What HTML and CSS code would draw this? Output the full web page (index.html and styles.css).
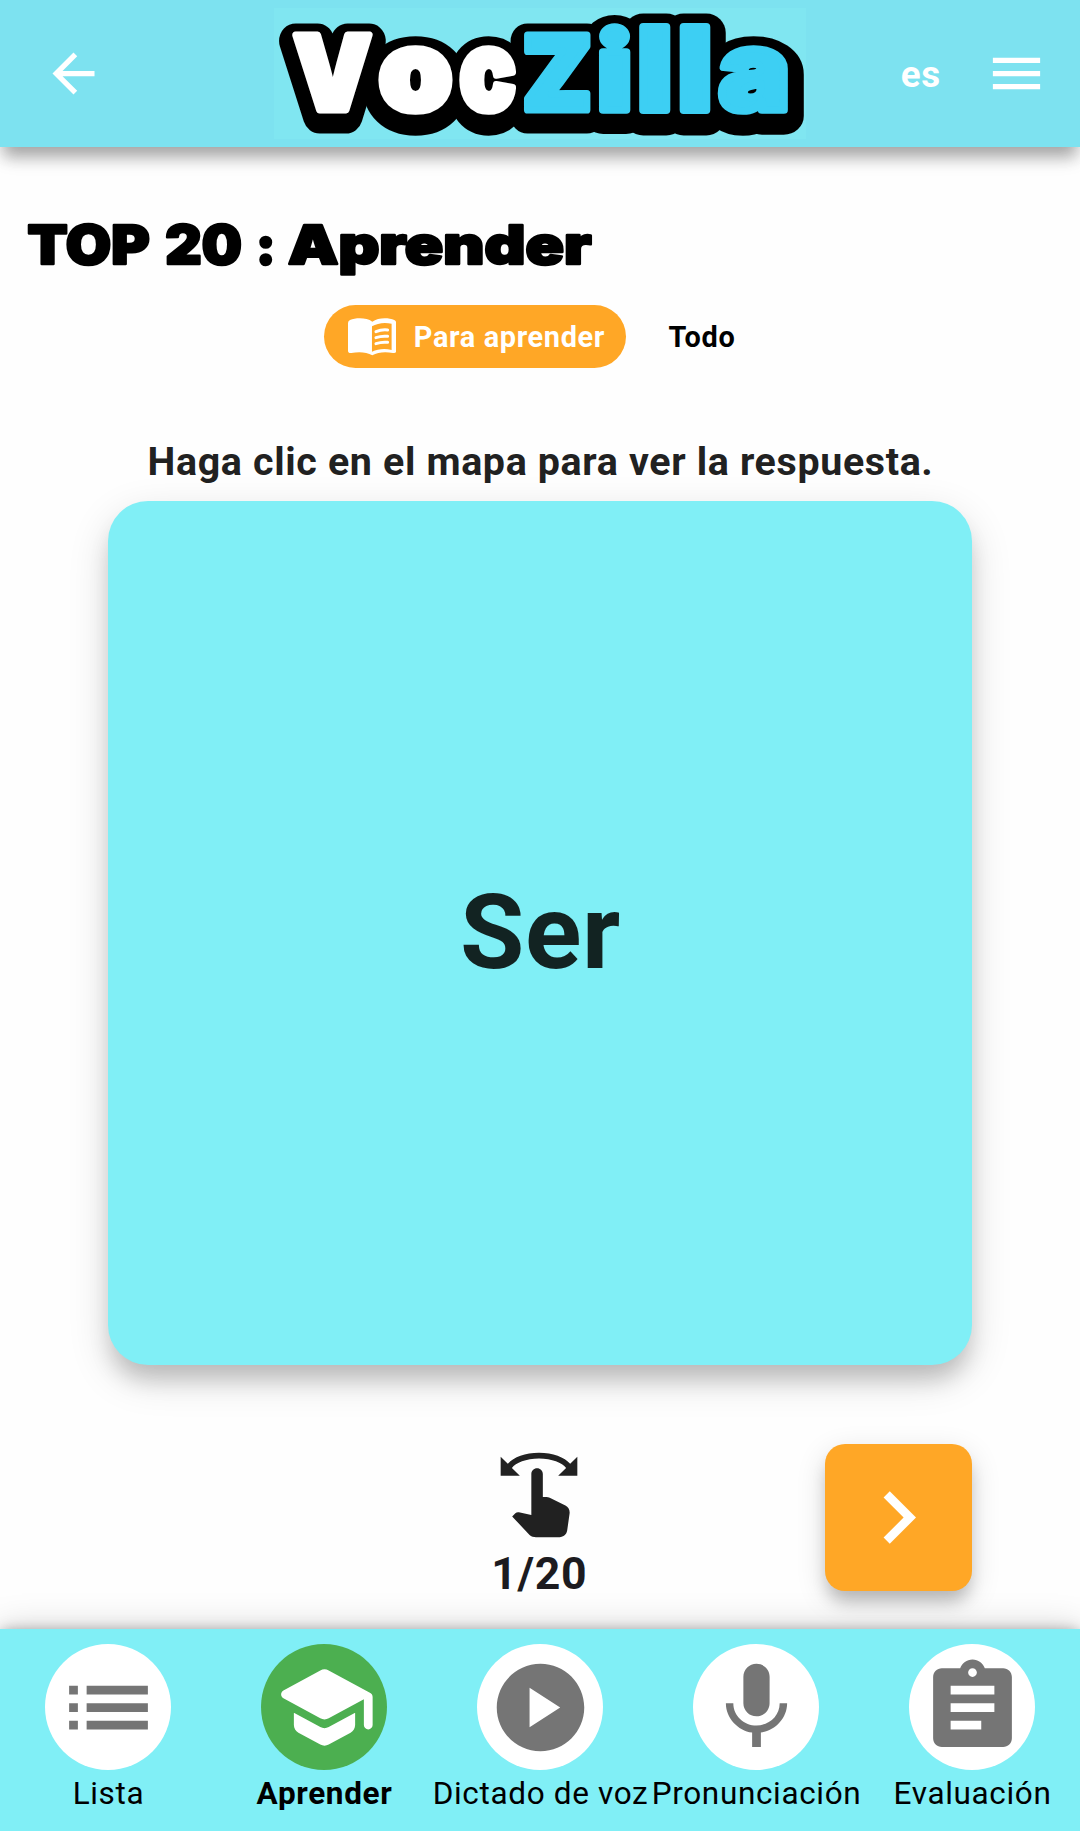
FILE: index.html
```
<!DOCTYPE html>
<html lang="es">
<head>
<meta charset="utf-8">
<title>VocZilla - Aprender</title>
<link rel="stylesheet" href="styles.css">
</head>
<body>
<header class="topbar">
  <svg class="icon-bar" viewBox="0 0 24 24"><path d="M20 11H7.83l5.59-5.59L12 4l-8 8 8 8 1.41-1.41L7.83 13H20v-2z"/></svg>
  <svg class="logo" viewBox="274 8 532 131" role="img" aria-label="VocZilla">
    <defs>
      <g id="letters">
        <g class="logo-first">
          <text transform="translate(293.5 110) scale(.98 1.03)">V</text>
          <text transform="translate(379.1 110) scale(1.168 1.1)">o</text>
          <text transform="translate(459.8 110) scale(.925 1.1)">c</text>
        </g>
        <g class="logo-second">
          <text transform="translate(522.5 110) scale(1 1.03)">Z</text>
          <text transform="translate(597.3 110) scale(1.176 1.057)">i</text>
          <text transform="translate(637.5 110) scale(1.167 1.144)">l</text>
          <text transform="translate(678 110) scale(1.148 1.144)">l</text>
          <text transform="translate(719.1 110) scale(1.183 1.1)">a</text>
        </g>
      </g>
    </defs>
    <use class="logo-outline" href="#letters" y="5.5"/>
    <rect x="405" y="55" width="24" height="50"/>
    <use class="logo-face" href="#letters"/>
  </svg>
  <span class="lang">es</span>
  <svg class="icon-bar" viewBox="0 0 24 24"><path d="M3 18h18v-2H3v2zm0-5h18v-2H3v2zm0-7v2h18V6H3z"/></svg>
</header>

<main class="content">
  <h1 class="title">
    <svg class="title-art" viewBox="0 147 1080 157">
      <text x="27.6" y="263.7" textLength="122" lengthAdjust="spacingAndGlyphs">TOP</text>
      <text x="165.3" y="263.7" textLength="76.5" lengthAdjust="spacingAndGlyphs">20</text>
      <text x="256" y="263.7" textLength="19.5" lengthAdjust="spacingAndGlyphs">:</text>
      <text x="288" y="263.7" textLength="303.4" lengthAdjust="spacingAndGlyphs">Aprender</text>
    </svg>
  </h1>
  <div class="tabs">
    <button class="tab tab-active">
      <svg class="book" viewBox="142 86 146 112">
        <path class="book-fill" fill-rule="evenodd" d="M142 101Q142 95 148 92C165 85 198 84 215 97C232 84 264 84 281 92Q287 95 287 101V184Q287 193 277 191C255 187 232 188 215 198C198 188 175 187 152 191Q142 192 142 184ZM214 111V187C232 179 252 176 273 182V103C252 98 230 101 214 111Z"/>
        <path class="book-lines" d="M226 127Q243 120 261 122M226 145Q243 139 261 141M226 163Q243 157 261 159"/>
      </svg>
      <span>Para aprender</span>
    </button>
    <button class="tab">Todo</button>
  </div>
  <p class="prompt">Haga clic en el mapa para ver la respuesta.</p>
  <section class="card">Ser</section>
  <div class="controls">
    <div class="progress">
      <svg class="swipe" viewBox="0 0 24 24"><path d="M18.89 14.75l-4.09-2.04c-.28-.14-.58-.21-.89-.21H13v-6C13 5.67 12.33 5 11.5 5S10 5.67 10 6.5v10.74l-3.25-.74c-.33-.07-.68.03-.92.28L5 17.62l4.54 4.79c.38.38 1.14.59 1.67.59h6.16c1 0 1.84-.73 1.98-1.72l.63-4.46c.12-.85-.32-1.69-1.09-2.07zM20.13 3.87C18.69 2.17 15.6 1 12 1S5.31 2.17 3.87 3.87L2 2v5h5L4.93 4.93c1-1.29 3.7-2.43 7.07-2.43s6.07 1.14 7.07 2.43L17 7h5V2l-1.87 1.87z"/></svg>
      <span class="count">1/20</span>
    </div>
    <button class="next" aria-label="Siguiente"><svg class="icon-lg" viewBox="0 0 24 24"><path d="M10 6 8.59 7.41 13.17 12l-4.58 4.59L10 18l6-6z"/></svg></button>
  </div>
</main>

<nav class="tabbar">
  <a class="item"><span class="disc"><svg class="icon-lg" viewBox="0 0 24 24"><path d="M3 13h2v-2H3v2zm0 4h2v-2H3v2zm0-8h2V7H3v2zm4 4h14v-2H7v2zm0 4h14v-2H7v2zM7 7v2h14V7H7z"/></svg></span><span class="label">Lista</span></a>
  <a class="item item-active"><span class="disc"><svg class="icon-lg" viewBox="0 0 24 24"><path d="M5 13.18v2.81c0 .73.4 1.41 1.04 1.76l5 2.73c.6.33 1.32.33 1.92 0l5-2.73c.64-.35 1.04-1.03 1.04-1.76v-2.81l-6.04 3.3c-.6.33-1.32.33-1.92 0L5 13.18zm6.04-9.66l-8.43 4.6c-.69.38-.69 1.38 0 1.76l8.43 4.6c.6.33 1.32.33 1.92 0L21 10.09V16c0 .55.45 1 1 1s1-.45 1-1V9.59c0-.37-.2-.7-.52-.88l-9.52-5.19c-.6-.32-1.32-.32-1.92 0z"/></svg></span><span class="label">Aprender</span></a>
  <a class="item"><span class="disc"><svg class="icon-lg" viewBox="0 0 24 24"><path d="M12 2C6.48 2 2 6.48 2 12s4.48 10 10 10 10-4.48 10-10S17.52 2 12 2zM9.5 16.5v-9l7 4.5-7 4.5z"/></svg></span><span class="label">Dictado de voz</span></a>
  <a class="item"><span class="disc"><svg class="icon-lg" viewBox="0 0 24 24"><path d="M12 14c1.66 0 2.99-1.34 2.99-3L15 5c0-1.66-1.34-3-3-3S9 3.34 9 5v6c0 1.66 1.34 3 3 3zm5.3-3c0 3-2.54 5.1-5.3 5.1S6.7 14 6.7 11H5c0 3.41 2.72 6.23 6 6.72V21h2v-3.28c3.28-.48 6-3.3 6-6.72h-1.7z"/></svg></span><span class="label">Pronunciación</span></a>
  <a class="item"><span class="disc"><svg class="icon-lg" viewBox="0 0 24 24"><path d="M19 3h-4.18C14.4 1.84 13.3 1 12 1c-1.3 0-2.4.84-2.82 2H5c-1.1 0-2 .9-2 2v14c0 1.1.9 2 2 2h14c1.1 0 2-.9 2-2V5c0-1.1-.9-2-2-2zm-7 0c.55 0 1 .45 1 1s-.45 1-1 1-1-.45-1-1 .45-1 1-1zm2 14H7v-2h7v2zm3-4H7v-2h10v2zm0-4H7V7h10v2z"/></svg></span><span class="label">Evaluación</span></a>
</nav>
</body>
</html>
```
FILE: styles.css
```
* { box-sizing: border-box; }

body {
  margin: 0;
  width: 1080px;
  height: 1831px;
  display: flex;
  flex-direction: column;
  overflow: hidden;
  background: #fefefe;
  font-family: Roboto, sans-serif;
  letter-spacing: .656px;
}

svg { display: block; flex: none; }

button {
  border: 0;
  padding: 0;
  background: none;
  font: inherit;
  letter-spacing: inherit;
}

/* Top bar */
.topbar {
  flex: none;
  height: 147px;
  display: flex;
  align-items: center;
  padding: 0 31.6px 0 42px;
  background: #7de2f0;
  box-shadow: 0 13px 14px -4px rgba(0, 0, 0, .22), 0 14px 18px -3px rgba(0, 0, 0, .14), 0 3px 24px rgba(0, 0, 0, .06);
}

.icon-bar { width: 63px; height: 63px; fill: #fff; }

.logo {
  width: 532px;
  height: 131px;
  margin-left: 169px;
  background: #80e6f1;
  font: 900 100px Inter, sans-serif;
  letter-spacing: 0;
}
.logo-face,
.logo-outline { stroke-linejoin: round; stroke-linecap: round; }
.logo-face { stroke-width: 7px; --first: #fff; --second: #3dcff3; }
.logo-outline { stroke-width: 34px; --first: #000; --second: #000; }
.logo-first { fill: var(--first); stroke: var(--first); }
.logo-second { fill: var(--second); stroke: var(--second); }

.lang {
  margin-left: auto;
  margin-right: 44.6px;
  padding-top: 2px;
  color: #fff;
  font-size: 36.75px;
  font-weight: 700;
  line-height: 44px;
}

/* Page content */
.content {
  flex: 1;
  min-height: 0;
  display: flex;
  flex-direction: column;
}

.title { margin: 0; }
.title-art {
  width: 1080px;
  height: 157.5px;
  font: 900 53px Inter, sans-serif;
  letter-spacing: 0;
  fill: #000;
  stroke: #000;
  stroke-width: 2.5px;
  stroke-linejoin: round;
}

.tabs {
  display: flex;
  align-items: center;
  height: 63px;
  padding-left: 324px;
  gap: 42.5px;
}
.tab {
  height: 63px;
  padding-top: 1px;
  color: #000;
  font-size: 28.875px;
  font-weight: 700;
  line-height: 62px;
}
.tab-active {
  display: flex;
  align-items: center;
  gap: 17.6px;
  width: 302px;
  padding: 2px 0 0 23.6px;
  border-radius: 31.5px;
  background: #ffa726;
  color: #fff;
  white-space: nowrap;
}
.book { width: 48.6px; height: 37.3px; }
.book-fill { fill: #fff; }
.book-lines { fill: none; stroke: #fff; stroke-width: 9; stroke-linecap: round; }

.prompt {
  margin: 67px 0 13.5px;
  padding-left: 1px;
  color: #212121;
  font-size: 39.375px;
  font-weight: 700;
  line-height: 53px;
  text-align: center;
}

.card {
  flex: none;
  align-self: center;
  width: 864px;
  height: 864px;
  padding-left: 1px;
  border-radius: 40px;
  background: #80eff6;
  box-shadow: 0 18px 22px -4px rgba(0, 0, 0, .18), 0 14px 42px rgba(0, 0, 0, .14);
  color: #122322;
  font-size: 104.5px;
  font-weight: 700;
  line-height: 864px;
  text-align: center;
}

.controls {
  display: grid;
  grid-template-columns: 147px 1fr 147px;
  align-items: start;
  margin: 79px 108px 0;
}
.progress {
  grid-column: 2;
  display: flex;
  flex-direction: column;
  align-items: center;
  padding: 5px 2.6px 0 0;
}
.swipe { width: 92px; height: 92px; fill: #212121; }
.count {
  padding-left: 1px;
  color: #1c1b20;
  font-size: 44.625px;
  font-weight: 700;
  line-height: 67px;
}
.next {
  display: flex;
  align-items: center;
  justify-content: center;
  height: 147px;
  border-radius: 20px;
  background: #ffa726;
  box-shadow: 0 13px 16px -3px rgba(0, 0, 0, .2), 0 9px 30px rgba(0, 0, 0, .14);
}
.next .icon-lg { fill: #fff; }
.icon-lg { width: 105px; height: 105px; }

/* Bottom navigation */
.tabbar {
  flex: none;
  display: grid;
  grid-template-columns: repeat(5, 216px);
  height: 202px;
  padding-top: 15.4px;
  background: #80eff6;
  box-shadow: 0 0 13px -2px rgba(0, 0, 0, .35), 0 0 34px rgba(0, 0, 0, .18);
}
.item {
  display: flex;
  flex-direction: column;
  align-items: center;
}
.disc {
  display: flex;
  align-items: center;
  justify-content: center;
  width: 126px;
  height: 126px;
  border-radius: 50%;
  background: #fff;
  fill: #757575;
}
.label {
  padding-left: 1px;
  color: #000;
  font-size: 31.5px;
  line-height: 48px;
  white-space: nowrap;
}
.item-active .disc { background: #4caf50; fill: #fff; }
.item-active .label { font-weight: 700; }
```
